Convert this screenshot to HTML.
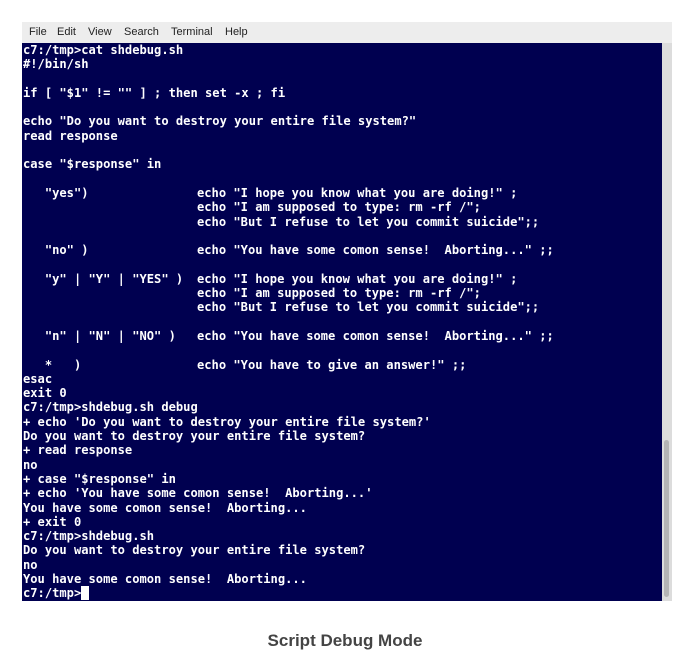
<!DOCTYPE html>
<html><head><meta charset="utf-8"><style>
html,body{margin:0;padding:0;background:#fff;width:690px;height:672px;overflow:hidden}
#frame{position:absolute;left:22px;top:22px;width:650px;height:579px;background:#ececec}
#menu{position:absolute;left:0;top:0;width:650px;height:21px;background:#ededed;font:11px "Liberation Sans",sans-serif;color:#222}
#menu span{position:absolute;top:4px}
#term{position:absolute;left:0;top:21px;width:640px;height:558px;background:#000050;overflow:hidden}
#sb{position:absolute;left:640px;top:21px;width:10px;height:558px;background:#dcdcdc}
#thumb{position:absolute;left:2px;top:397px;width:5px;height:157px;background:#b4b4b4;border-radius:3px}
.l{position:relative;margin-left:1px;height:14.3px;font:bold 12.1px/14.3px "DejaVu Sans Mono","Liberation Mono",monospace;color:#fff;white-space:pre}
.e{position:absolute;left:174px;top:0}
#cap{position:absolute;left:0;width:690px;top:631px;text-align:center;font:bold 17px "Liberation Sans",sans-serif;color:#444}
</style></head><body>
<div id="frame">
<div id="menu"><span style="left:7px">File</span><span style="left:35px">Edit</span><span style="left:66px">View</span><span style="left:102px">Search</span><span style="left:149px">Terminal</span><span style="left:203px">Help</span></div>
<div id="term">
<div class="l">c7:/tmp&gt;cat shdebug.sh</div>
<div class="l">#!/bin/sh</div>
<div class="l"></div>
<div class="l">if [ "$1" != "" ] ; then set -x ; fi</div>
<div class="l"></div>
<div class="l">echo "Do you want to destroy your entire file system?"</div>
<div class="l">read response</div>
<div class="l"></div>
<div class="l">case "$response" in</div>
<div class="l"></div>
<div class="l">   "yes")<span class="e">echo "I hope you know what you are doing!" ;</span></div>
<div class="l"><span class="e">echo "I am supposed to type: rm -rf /";</span></div>
<div class="l"><span class="e">echo "But I refuse to let you commit suicide";;</span></div>
<div class="l"></div>
<div class="l">   "no" )<span class="e">echo "You have some comon sense!  Aborting..." ;;</span></div>
<div class="l"></div>
<div class="l">   "y" | "Y" | "YES" )<span class="e">echo "I hope you know what you are doing!" ;</span></div>
<div class="l"><span class="e">echo "I am supposed to type: rm -rf /";</span></div>
<div class="l"><span class="e">echo "But I refuse to let you commit suicide";;</span></div>
<div class="l"></div>
<div class="l">   "n" | "N" | "NO" )<span class="e">echo "You have some comon sense!  Aborting..." ;;</span></div>
<div class="l"></div>
<div class="l">   *   )<span class="e">echo "You have to give an answer!" ;;</span></div>
<div class="l">esac</div>
<div class="l">exit 0</div>
<div class="l">c7:/tmp&gt;shdebug.sh debug</div>
<div class="l">+ echo 'Do you want to destroy your entire file system?'</div>
<div class="l">Do you want to destroy your entire file system?</div>
<div class="l">+ read response</div>
<div class="l">no</div>
<div class="l">+ case "$response" in</div>
<div class="l">+ echo 'You have some comon sense!  Aborting...'</div>
<div class="l">You have some comon sense!  Aborting...</div>
<div class="l">+ exit 0</div>
<div class="l">c7:/tmp&gt;shdebug.sh</div>
<div class="l">Do you want to destroy your entire file system?</div>
<div class="l">no</div>
<div class="l">You have some comon sense!  Aborting...</div>
<div class="l">c7:/tmp&gt;<span style="background:#fff"> </span></div>
</div>
<div id="sb"><div id="thumb"></div></div>
</div>
<div id="cap">Script Debug Mode</div>
</body></html>
